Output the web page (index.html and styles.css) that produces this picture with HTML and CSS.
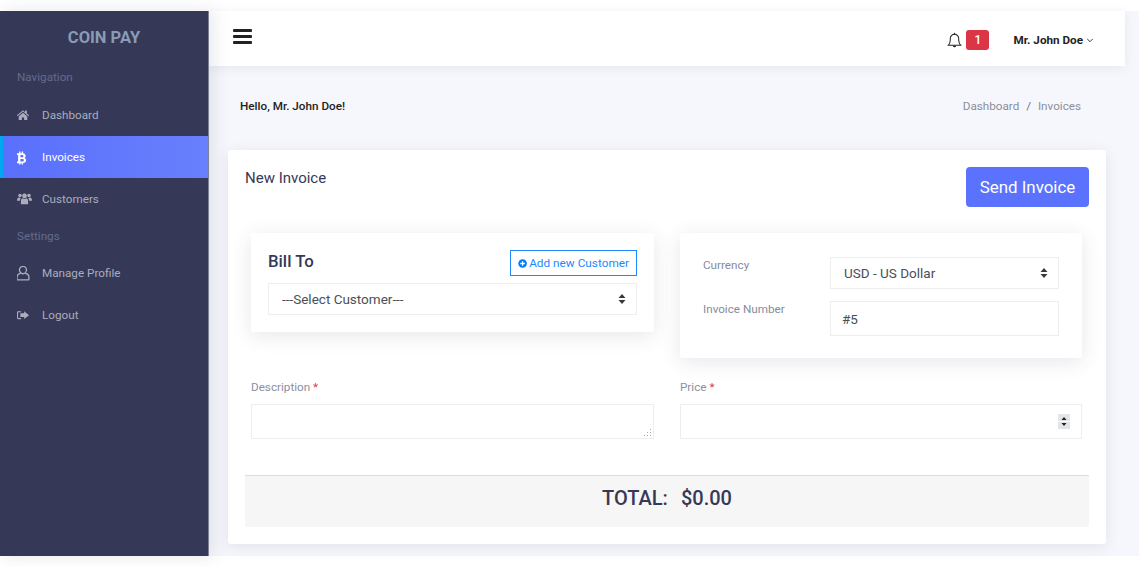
FILE: index.html
```html
<!DOCTYPE html>
<html lang="en">
<head>
    <meta charset="UTF-8">
    <meta name="viewport" content="width=device-width, initial-scale=1.0">
    <title>Coin Pay - New Invoice</title>
    <link rel="stylesheet" href="styles.css">
</head>
<body>
    <div class="wrapper">
        <aside class="sidebar">
            <div class="logo">COIN PAY</div>
            <div class="nav-title nav-title-first">Navigation</div>
            <a class="nav-item" href="#">
                <svg class="nav-icon" viewBox="1 0 17.500 17.500"><path d="M8 2.500 1 8.600l.8.9L8 4.100l6.200 5.400.8-.9-2.500-2.200V3h-2v2.100zM3 10v4h3.700v-3h2.600v3H13v-4L8 5.600z"/></svg>
                <span>Dashboard</span>
            </a>
            <a class="nav-item active" href="#">
                <svg class="nav-icon" viewBox="3.400 0 15 15"><path fill-rule="evenodd" d="M5.500 1.500h1.400v1.700h1.200V1.500h1.400v1.800c1.600.3 2.500 1.200 2.500 2.600 0 1-.5 1.700-1.300 2 1.100.3 1.700 1.100 1.700 2.300 0 1.700-1.100 2.700-2.900 2.900v1.400H8.100v-1.300H6.900v1.300H5.500v-1.300H3.400v-1.700h1.100V5H3.400V3.200h2.100zM6.800 5v2.300h1.700c.9 0 1.300-.4 1.300-1.150S9.400 5 8.500 5zm0 3.900v2.600h2c.9 0 1.400-.5 1.400-1.300S9.700 8.900 8.800 8.900z"/></svg>
                <span>Invoices</span>
            </a>
            <a class="nav-item" href="#">
                <svg class="nav-icon" viewBox="0.300 0.800 15.400 15.400"><circle cx="3.400" cy="4.300" r="1.800"/><circle cx="12.600" cy="4.300" r="1.800"/><circle cx="8" cy="4.800" r="2.400"/><path d="M.3 9.500c0-2 .8-3 2.300-3 .6 0 1.100.2 1.500.5-.5.700-.8 1.600-.8 2.700H.3zM15.700 9.500c0-2-.8-3-2.300-3-.6 0-1.100.2-1.500.5.5.7.8 1.600.8 2.700h3zM4.300 13.400V10c0-1.800 1-2.700 2-2.700.5.400 1 .6 1.700.6s1.200-.2 1.700-.6c1 0 2 .9 2 2.700v3.400z"/></svg>
                <span>Customers</span>
            </a>
            <div class="nav-title">Settings</div>
            <a class="nav-item" href="#">
                <svg class="nav-icon" viewBox="2.600 1.500 13.600 13.600"><path fill="none" stroke="currentColor" stroke-width="1.200" d="M8 1.800a3.200 3.200 0 0 1 3.200 3.200c0 1.700-1.300 3.500-3.200 3.500S4.800 6.700 4.800 5A3.200 3.200 0 0 1 8 1.800zM5.700 8.300c-2 .3-3.100 1.500-3.100 3.300v1.900c0 .4.200.6.600.6h9.600c.4 0 .6-.2.600-.6v-1.900c0-1.800-1.100-3-3.100-3.300"/></svg>
                <span>Manage Profile</span>
            </a>
            <a class="nav-item" href="#">
                <svg class="nav-icon" viewBox="1.500 0 16.800 16.800"><path d="M6 3.500H3C2 3.500 1.500 4 1.500 5v6c0 1 .5 1.500 1.500 1.500h3v-1.200H3.400c-.5 0-.7-.2-.7-.7V5.400c0-.5.2-.7.7-.7H6z"/><path d="M9.500 3.600 15 8l-5.500 4.400V10H5.200V6h4.300z"/></svg>
                <span>Logout</span>
            </a>
        </aside>

        <main class="main">
            <header class="topbar">
                <button class="menu-btn" type="button" aria-label="Menu"><span></span><span></span><span></span></button>
                <div class="topbar-right">
                    <svg class="bell" viewBox="0 0 16 18"><path fill="none" stroke="#222" stroke-width="1.100" d="M1.500 14h13c-1.300-1.300-2-2.700-2-5.500V7A4.500 4.500 0 0 0 8 2.300 4.500 4.500 0 0 0 3.500 7v1.500c0 2.800-.7 4.200-2 5.500z"/><path d="M6.300 14.500a1.700 1.700 0 0 0 3.400 0zM7.300 1.500a.7.700 0 0 1 1.400 0v1h-1.400z" fill="#222"/></svg>
                    <span class="badge">1</span>
                    <span class="user">Mr. John Doe</span>
                    <svg class="chevron" viewBox="0 0 10 6"><path fill="none" stroke="#222" stroke-width="1.100" d="M1.500 1 5 4.500 8.500 1"/></svg>
                </div>
            </header>

            <div class="page-head">
                <p class="hello">Hello, Mr. John Doe!</p>
                <div class="breadcrumb">
                    <a href="#">Dashboard</a>
                    <span class="sep">/</span>
                    <span>Invoices</span>
                </div>
            </div>

            <section class="card">
                <div class="card-head">
                    <h2>New Invoice</h2>
                    <button class="btn-send" type="button">Send Invoice</button>
                </div>

                <div class="form-grid">
                    <div class="panel panel-bill">
                        <div class="bill-head">
                            <h3>Bill To</h3>
                            <button class="btn-add" type="button">
                                <svg viewBox="0 0 12 12"><circle cx="6" cy="6" r="5.600" fill="#007bff"/><path d="M6 3v6M3 6h6" stroke="#fff" stroke-width="1.700"/></svg>
                                Add new Customer
                            </button>
                        </div>
                        <select class="field field-select">
                            <option>---Select Customer---</option>
                        </select>
                    </div>

                    <div class="panel panel-meta">
                        <div class="meta-row">
                            <label class="meta-label">Currency</label>
                            <select class="field field-select">
                                <option>USD - US Dollar</option>
                            </select>
                        </div>
                        <div class="meta-row meta-row-tall">
                            <label class="meta-label">Invoice Number</label>
                            <input class="field field-text" type="text" value="#5">
                        </div>
                    </div>

                    <div class="form-group">
                        <label class="form-label">Description <i>*</i></label>
                        <textarea class="field field-area"></textarea>
                    </div>
                    <div class="form-group">
                        <label class="form-label">Price <i>*</i></label>
                        <input class="field field-num" type="number">
                    </div>
                </div>

                <div class="total">
                    <strong>TOTAL:</strong>
                    <strong>$0.00</strong>
                </div>
            </section>
        </main>
    </div>
</body>
</html>
```
FILE: styles.css
```css
* {
    box-sizing: border-box;
}
html, body {
    height: 100%;
}
body {
    margin: 0;
    padding: 11px 0 10px;
    background: #fff;
    font-family: Roboto, "Liberation Sans", sans-serif;
    color: #353957;
    overflow: hidden;
}
a {
    text-decoration: none;
    color: inherit;
}
.wrapper {
    display: flex;
    height: 100%;
    background: #f6f7fc;
}

/* sidebar */
.sidebar {
    width: 209px;
    flex-shrink: 0;
    background: #353957;
    border-right: 1px solid #7d8090;
    box-shadow: 4px 0 16px rgba(53, 57, 87, 0.12);
    z-index: 2;
}
.logo {
    height: 49px;
    padding-top: 17px;
    text-align: center;
    font-size: 16.500px;
    line-height: 20px;
    font-weight: 700;
    color: #8a9bb5;
}
.nav-title {
    height: 32px;
    padding: 8px 0 0 17px;
    font-size: 11.700px;
    line-height: 16px;
    color: #636b8c;
}
.nav-title-first {
    height: 34px;
    padding-top: 9px;
}
.nav-item {
    display: flex;
    align-items: center;
    height: 42px;
    padding-left: 17px;
    font-size: 11.700px;
    color: #a9adbd;
}
.nav-icon {
    width: 15px;
    height: 15px;
    margin-right: 10px;
    fill: currentColor;
    flex-shrink: 0;
}
.nav-item.active {
    background: linear-gradient(to right, #5a6ffc, #6880fd);
    border-left: 3px solid #00a8f0;
    padding-left: 14px;
    color: #fff;
}

/* top bar */
.main {
    flex: 1;
    min-width: 0;
}
.topbar {
    display: flex;
    align-items: center;
    justify-content: space-between;
    height: 55px;
    margin-right: 14px;
    padding: 0 31px 0 24px;
    background: #fff;
    box-shadow: 0 2px 10px rgba(53, 57, 87, 0.08);
}
.menu-btn {
    display: flex;
    flex-direction: column;
    gap: 3px;
    width: 19px;
    margin: -5px 0 0;
    padding: 0;
    border: none;
    background: none;
}
.menu-btn span {
    height: 3px;
    background: #222;
    border-radius: 1px;
}
.topbar-right {
    display: flex;
    align-items: center;
    margin-top: 3px;
}
.bell {
    width: 15px;
    height: 17px;
}
.badge {
    width: 23px;
    height: 20px;
    margin: 0 24px 0 4px;
    border-radius: 3px;
    background: #dc3545;
    color: #fff;
    font-size: 12px;
    font-weight: 500;
    line-height: 20px;
    text-align: center;
}
.user {
    font-size: 11.700px;
    font-weight: 700;
    color: #222;
}
.chevron {
    width: 8px;
    height: 5px;
    margin-left: 3px;
}

/* page title row */
.page-head {
    display: flex;
    align-items: center;
    justify-content: space-between;
    height: 84px;
    padding: 0 58px 4px 31px;
}
.hello {
    margin: 0;
    font-size: 11.700px;
    font-weight: 500;
    color: #222;
}
.breadcrumb {
    font-size: 11.700px;
    color: #8c8f99;
}
.sep {
    margin: 0 4px;
    color: #6d7080;
}

/* card */
.card {
    width: 878px;
    height: 394px;
    margin-left: 19px;
    padding: 17px;
    background: #fff;
    border-radius: 3px;
    box-shadow: 0 3px 14px rgba(53, 57, 87, 0.1);
}
.card-head {
    display: flex;
    justify-content: space-between;
    align-items: flex-start;
    height: 66px;
}
.card-head h2 {
    margin: 1px 0 0;
    font-size: 15px;
    line-height: 20px;
    font-weight: 400;
    color: #353957;
}
.btn-send {
    width: 123px;
    height: 40px;
    border: none;
    border-radius: 4px;
    background: #5a72fe;
    color: #fff;
    font-family: inherit;
    font-size: 16.900px;
}
.form-grid {
    display: grid;
    grid-template-columns: 403px 402px;
    grid-template-rows: 125px auto;
    column-gap: 26px;
    align-items: start;
    padding: 0 6px;
    min-height: 242px;
}
.panel {
    background: #fff;
    border-radius: 2px;
    box-shadow: 0 4px 20px rgba(53, 57, 87, 0.12);
}
.panel-bill {
    height: 99px;
    padding: 17px;
}
.bill-head {
    display: flex;
    justify-content: space-between;
    align-items: center;
    height: 26px;
    margin-bottom: 7px;
}
.bill-head h3 {
    margin: 0 0 5px;
    font-size: 16.800px;
    font-weight: 500;
    color: #353957;
}
.btn-add {
    display: flex;
    align-items: center;
    gap: 2px;
    width: 127px;
    height: 26px;
    padding: 0 7px;
    border: 1px solid #1e88ff;
    background: #fff;
    color: #1e88ff;
    font-family: inherit;
    font-size: 11.800px;
    white-space: nowrap;
}
.btn-add svg {
    width: 11px;
    height: 11px;
}
.field {
    display: block;
    width: 100%;
    border: 1px solid #eceef1;
    background-color: #fff;
    border-radius: 0;
    color: #495057;
    font-family: inherit;
    font-size: 13.500px;
    outline: none;
}
.field-select {
    height: 32px;
    padding: 0 13px;
    appearance: none;
    background-image: url("data:image/svg+xml,%3Csvg xmlns='http://www.w3.org/2000/svg' width='8' height='10'%3E%3Cpath fill='%23343a40' d='M4 0 7.500 4H.5zM4 10 .5 6h7z'/%3E%3C/svg%3E");
    background-repeat: no-repeat;
    background-position: right 10px center;
}
.panel-meta {
    height: 125px;
    padding: 24px 23px;
}
.meta-row {
    display: flex;
    height: 32px;
    margin-bottom: 12px;
}
.meta-row-tall {
    height: 35px;
    margin-bottom: 0;
}
.meta-label {
    width: 127px;
    flex-shrink: 0;
    margin-top: -1px;
    font-size: 11.700px;
    line-height: 18px;
    color: #868b9d;
}
.field-text {
    height: 35px;
    padding: 0 11px;
}
.form-group {
    padding-top: 21px;
}
.form-label {
    display: block;
    margin-bottom: 9px;
    font-size: 11.700px;
    line-height: 16px;
    color: #8b8f9f;
}
.form-label i {
    font-style: normal;
    color: #dc3545;
}
.field-area, .field-num {
    height: 35px;
    padding: 6px 11px;
}
.field-area {
    resize: vertical;
}
.field-area::-webkit-resizer {
    background: url("data:image/svg+xml,%3Csvg xmlns='http://www.w3.org/2000/svg' width='8' height='8'%3E%3Cpath fill='%23aab' d='M6 0h1v1H6zM3 3h1v1H3zM6 3h1v1H6zM0 6h1v1H0zM3 6h1v1H3zM6 6h1v1H6z'/%3E%3C/svg%3E") no-repeat right 1px bottom 1px;
}
.field-num::-webkit-inner-spin-button {
    appearance: none;
    opacity: 1;
    width: 12px;
    height: 15px;
    margin-right: 0;
    background: url("data:image/svg+xml,%3Csvg xmlns='http://www.w3.org/2000/svg' width='12' height='15'%3E%3Crect width='12' height='15' fill='%23e4e5e8'/%3E%3Crect y='7' width='12' height='1' fill='%23fff'/%3E%3Cpath fill='%23222' d='M6 3 8.500 6h-5zM6 12 3.500 9h5z'/%3E%3C/svg%3E") no-repeat;
}

/* total */
.total {
    display: flex;
    justify-content: center;
    gap: 13px;
    height: 52px;
    padding-top: 10px;
    background: #f6f6f6;
    border-top: 1px solid #dcdcdc;
    border-radius: 0 0 3px 3px;
    font-size: 20px;
    line-height: 24px;
    color: #353957;
}
.total strong {
    font-weight: 500;
}
```
